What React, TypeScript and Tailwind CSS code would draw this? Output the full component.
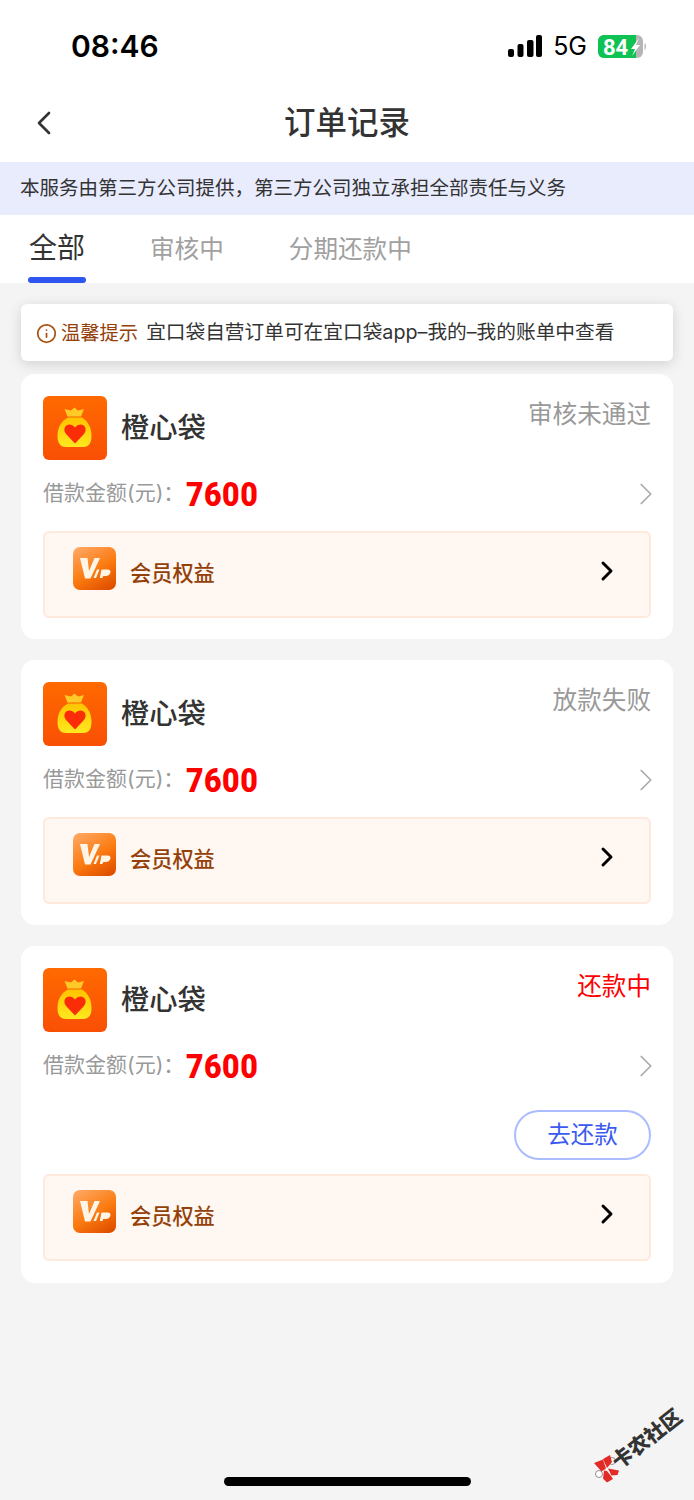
import { ChevronLeft, ChevronRight, Info } from "lucide-react";

function BagIcon() {
    return (
        <svg width="64" height="64" viewBox="0 0 64 64" className="shrink-0">
            <defs>
                <linearGradient id="bagBg" x1="0" y1="0" x2="0" y2="1">
                    <stop offset="0" stopColor="#ff6a00" />
                    <stop offset="1" stopColor="#f94f05" />
                </linearGradient>
                <linearGradient id="bagBody" x1="0" y1="0" x2="0" y2="1">
                    <stop offset="0" stopColor="#ffc400" />
                    <stop offset="1" stopColor="#ffe81f" />
                </linearGradient>
            </defs>
            <rect width="64" height="64" rx="6" fill="url(#bagBg)" />
            <path d="M21.500 13l6.500 1.500L31.500 11.500l3.500 3 6-1.500-3 7.500h-13.500z" fill="#ffc928" />
            <path d="M25 21.500h14c5.500 3.500 9.500 9.500 9.500 18.500 0 8-3.500 11-8.500 11H23c-5 0-8.500-3-8.500-11 0-9 4-15 10.500-18.500z" fill="url(#bagBody)" />
            <path d="M32 47.500L23.500 38.500c-2.500-2.500-2.500-5.500-1.500-7.500 1.500-3.500 7.500-3.500 10 .5 2.500-4 8.500-4 10-.5 1 2 1 5-1.500 7.500z" fill="#fb2c08" />
        </svg>
    );
}

function VipIcon({ id }: { id: string }) {
    return (
        <svg width="43" height="43" viewBox="0 0 43 43" className="shrink-0">
            <defs>
                <linearGradient id={id} x1="0.2" y1="0" x2="0.8" y2="1">
                    <stop offset="0" stopColor="#ffa45c" />
                    <stop offset="0.55" stopColor="#fb7a10" />
                    <stop offset="1" stopColor="#e04f00" />
                </linearGradient>
            </defs>
            <rect width="43" height="43" rx="7" fill={`url(#${id})`} />
            <path d="M7 11h7.500l1.500 13L21.500 11H27L17.500 31.500h-5.500z" fill="#fff5e6" />
            <path d="M24 22.500h2.500L23 31h-2.500zM28.500 22.500h6c2.500 0 3.500 1.500 2.800 3.500-.7 2-2.500 3-4.500 3h-2.500l-1 2h-2.500z" fill="#fff5e6" />
        </svg>
    );
}

function Card({ status, statusColor, pay, id }: { status: string; statusColor: string; pay?: boolean; id: string }) {
    return (
        <div className={`bg-white rounded-[14px] pt-[22px] ${pay ? "pb-[22px]" : "pb-[21px]"} px-[22px]`}>
            <div className="flex items-start justify-between">
                <div className="flex items-center gap-[14px]">
                    <BagIcon />
                    <span className="text-[28.300px] font-medium text-[#333] leading-none">橙心袋</span>
                </div>
                <span className={`text-[24.600px] leading-[36px] ${statusColor}`}>{status}</span>
            </div>
            <div className="relative flex items-center justify-between mt-[13px] h-[42px]">
                <div className="flex items-center">
                    <span className="text-[21px] text-[#999] w-[143px] -mt-[2px]">{"借款金额(元)\uFF1A"}</span>
                    <span className="inline-block origin-left scale-x-[0.92] font-['Roboto',sans-serif] font-black text-[33px] leading-none text-[#ff0000] tracking-[0.5px]">7600</span>
                </div>
                <ChevronRight className="absolute -right-[14px] top-[2px] w-[38px] h-[38px] text-[#aaa]" strokeWidth={1.1} />
            </div>
            {pay ? (
                <div className="flex justify-end mt-[23px]">
                    <div className="w-[137px] h-[50px] rounded-full border-2 border-[#abbcff] flex items-center justify-center text-[23.500px] text-[#3a5af0]">
                        去还款
                    </div>
                </div>
            ) : null}
            <div className={`${pay ? "mt-[14px]" : "mt-[16px]"} h-[87px] rounded-[6px] border-2 border-[#ffe8dc] bg-[#fff7f1] flex items-center pl-[28px] pr-[26px]`}>
                <div className="-mt-[12px]">
                    <VipIcon id={id} />
                </div>
                <span className="ml-[14px] text-[21.200px] font-medium text-[#94400a] -mt-[2px]">会员权益</span>
                <ChevronRight className="ml-auto w-[32px] h-[32px] text-black -mt-[7px]" strokeWidth={2.2} />
            </div>
        </div>
    );
}

export default function App() {
    return (
        <div className="relative w-[694px] h-[1500px] bg-[#f4f4f4] overflow-hidden font-['Inter','Noto_Sans_CJK_SC',sans-serif]">
            <div className="bg-white h-[283px]">
                {/* Status bar */}
                <div className="h-[88px] flex items-center justify-between pl-[71px] pr-[47px] pt-[4px]">
                    <span className="font-['Inter',sans-serif] text-[30px] font-semibold text-black">08:46</span>
                    <div className="flex items-center">
                        <svg width="34" height="22" viewBox="0 0 34 22">
                            <rect x="0" y="14" width="6" height="8" rx="2" fill="#000" />
                            <rect x="9.500" y="9" width="6" height="13" rx="2" fill="#000" />
                            <rect x="19" y="5" width="6.500" height="17" rx="2" fill="#000" />
                            <rect x="28" y="0" width="6" height="22" rx="2" fill="#000" />
                        </svg>
                        <span className="ml-[11px] mt-[2px] font-['Inter',sans-serif] text-[25px] text-black">5G</span>
                        <svg width="49" height="23" viewBox="0 0 49 23" className="ml-[11px]">
                            <rect x="0" y="0" width="45" height="23" rx="6" fill="#b5b5b5" />
                            <path d="M6 0h32v23H6a6 6 0 0 1-6-6V6a6 6 0 0 1 6-6z" fill="#0ec254" />
                            <path d="M46.500 8c2 1 2 6 0 7z" fill="#b5b5b5" />
                            <text x="5" y="19.500" fontSize="22" fontWeight="700" fontFamily="Roboto" fill="#fff">84</text>
                            <path d="M41 3l-8 11h4l-3 7 8-11h-4z" fill="#fff" />
                        </svg>
                    </div>
                </div>
                {/* Nav bar */}
                <div className="relative h-[74px] flex items-center justify-center">
                    <ChevronLeft className="absolute left-[24px] top-[15px] w-[40px] h-[40px] text-[#333]" strokeWidth={1.6} />
                    <span className="text-[31.500px] font-medium text-[#333] -mt-[4px]">订单记录</span>
                </div>
                {/* Disclaimer */}
                <div className="h-[53px] bg-[#e9ecfd] flex items-center pl-[20px] text-[19.500px] text-[#333]">
                    {"本服务由第三方公司提供\uFF0C第三方公司独立承担全部责任与义务"}
                </div>
                {/* Tabs */}
                <div className="relative h-[68px] flex items-start pt-[13px]">
                    <span className="ml-[29px] text-[28px] text-[#333] leading-[40px]">全部</span>
                    <span className="ml-[65px] text-[24.600px] text-[#a0a0a0] leading-[42px]">审核中</span>
                    <span className="ml-[65px] text-[24.600px] text-[#a0a0a0] leading-[42px]">分期还款中</span>
                    <div className="absolute left-[28px] bottom-0 w-[58px] h-[6px] rounded-[3px] bg-[#2f56ee]" />
                </div>
            </div>

            <div className="px-[21px] pt-[21px]">
                {/* Tip */}
                <div className="h-[57px] bg-white rounded-[6px] shadow-[0_3px_14px_rgba(0,0,0,0.14)] flex items-center pl-[15px] pt-[1px]">
                    <Info className="w-[21px] h-[21px] text-[#a8500f]" strokeWidth={2} />
                    <span className="ml-[4px] text-[19.300px] text-[#94400a]">温馨提示</span>
                    <span className="ml-[8px] text-[19.700px] text-[#333]">宜口袋自营订单可在宜口袋app–我的–我的账单中查看</span>
                </div>

                <div className="mt-[13px] flex flex-col gap-[21px]">
                    <Card id="vip1" status="审核未通过" statusColor="text-[#999]" />
                    <Card id="vip2" status="放款失败" statusColor="text-[#999]" />
                    <Card id="vip3" status="还款中" statusColor="text-[#ff0000]" pay />
                </div>
            </div>

            {/* Home indicator */}
            <div className="absolute left-[224px] top-[1477px] w-[247px] h-[9px] rounded-full bg-black" />

            {/* Watermark */}
            <svg width="26" height="28" viewBox="0 0 26 28" className="absolute left-[594px] top-[1455px]">
                <circle cx="18" cy="6" r="3.500" fill="#fff" stroke="#666" strokeWidth="0.7" />
                <circle cx="5" cy="19" r="3.500" fill="#fff" stroke="#666" strokeWidth="0.7" />
                <path d="M0 8l9-3.500 3 9-4.500 3zM9 4l7-4 2 7-5 6zM14 13.500l11 2-1.500 4.500-6 .5zM10 15.500l3 .5 4 5 2 3-6 3.500-4-4z" fill="#e22b26" />
            </svg>
            <span className="absolute left-[606px] top-[1425px] text-[20.500px] leading-[28px] font-black text-[#333] whitespace-nowrap -rotate-[38deg]">卡农社区</span>
        </div>
    );
}
